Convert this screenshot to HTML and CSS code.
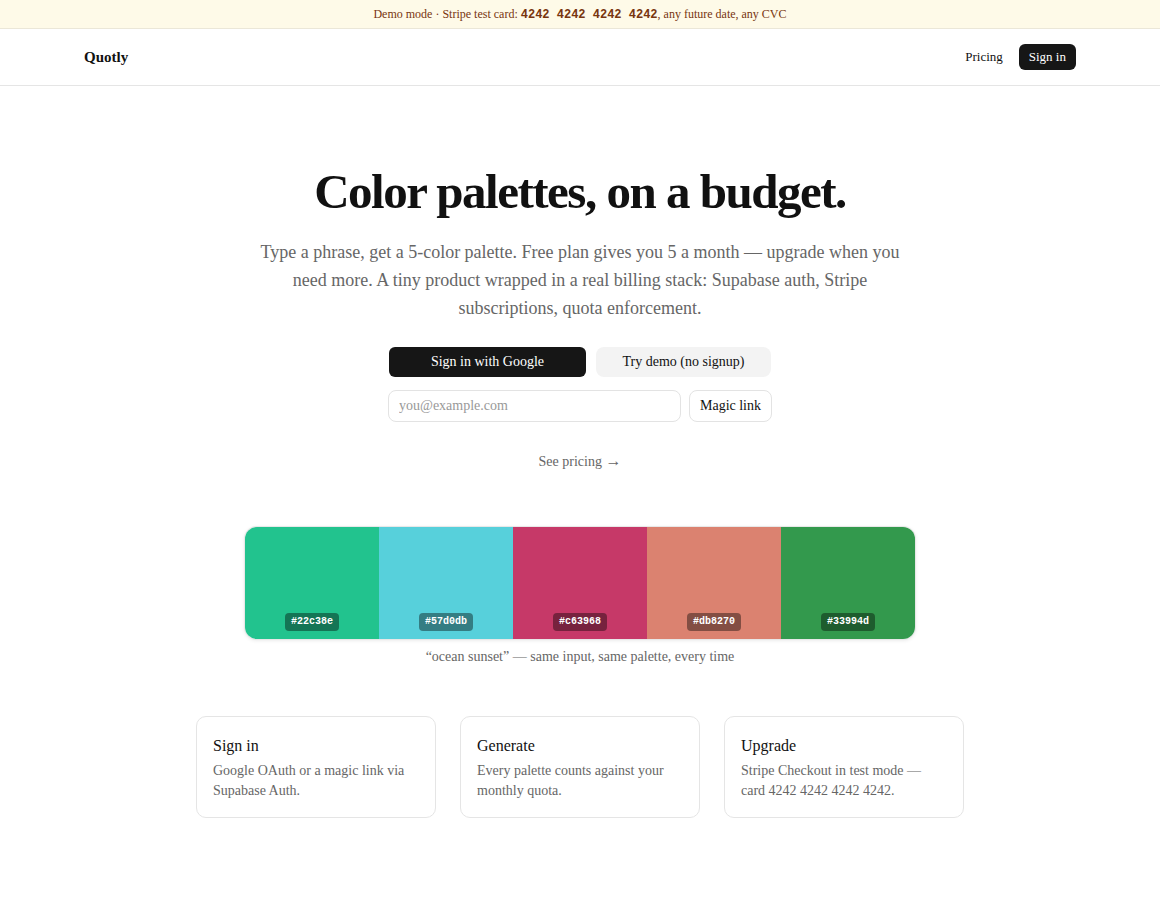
FILE: index.html
```html
<!DOCTYPE html>
<html lang="en">
<head>
  <meta charset="UTF-8">
  <meta name="viewport" content="width=device-width, initial-scale=1.0">
  <title>Quotly</title>
  <link rel="stylesheet" href="styles.css">
</head>
<body>
  <div class="banner">Demo mode · Stripe test card: <code>4242 4242 4242 4242</code>, any future date, any CVC</div>
  <header class="nav">
    <div class="wrap nav-inner">
      <a class="brand" href="#">Quotly</a>
      <nav class="nav-links">
        <a href="#">Pricing</a>
        <a class="btn-dark small" href="#">Sign in</a>
      </nav>
    </div>
  </header>

  <main class="hero">
    <h1>Color palettes, on a budget.</h1>
    <p class="lede">Type a phrase, get a 5-color palette. Free plan gives you 5 a month — upgrade when you need more. A tiny product wrapped in a real billing stack: Supabase auth, Stripe subscriptions, quota enforcement.</p>

    <div class="actions">
      <button class="btn-dark wide">Sign in with Google</button>
      <button class="btn-light">Try demo (no signup)</button>
    </div>
    <form class="magic">
      <input type="email" placeholder="you@example.com">
      <button type="button" class="btn-outline">Magic link</button>
    </form>
    <a class="see-pricing" href="#">See pricing <span class="arrow">→</span></a>

    <div class="palette">
      <div class="swatch" style="background:#22c38e"><span>#22c38e</span></div>
      <div class="swatch" style="background:#57d0db"><span>#57d0db</span></div>
      <div class="swatch" style="background:#c63968"><span>#c63968</span></div>
      <div class="swatch" style="background:#db8270"><span>#db8270</span></div>
      <div class="swatch" style="background:#33994d"><span>#33994d</span></div>
    </div>
    <p class="caption">“ocean sunset” — same input, same palette, every time</p>

    <div class="steps">
      <div class="step">
        <h3>Sign in</h3>
        <p>Google OAuth or a magic link via Supabase Auth.</p>
      </div>
      <div class="step">
        <h3>Generate</h3>
        <p>Every palette counts against your monthly quota.</p>
      </div>
      <div class="step">
        <h3>Upgrade</h3>
        <p>Stripe Checkout in test mode — card 4242 4242 4242 4242.</p>
      </div>
    </div>
  </main>
</body>
</html>
```

FILE: styles.css
```css
body {
  margin: 0;
  font-family: "Liberation Serif", "Times New Roman", serif;
  color: #111;
  background: #fff;
}
a {
  color: inherit;
  text-decoration: none;
}
.banner {
  background: #fefae8;
  color: #78350f;
  border-bottom: 1px solid #ebe7d8;
  text-align: center;
  font-size: 12px;
  height: 28px;
  line-height: 28px;
}
.banner code {
  font-family: "Liberation Mono", monospace;
  font-weight: bold;
  font-size: 12px;
}
.nav {
  border-bottom: 1px solid #e5e5e5;
}
.wrap {
  max-width: 992px;
  margin: 0 auto;
  padding: 0 16px;
}
.nav-inner {
  display: flex;
  align-items: center;
  justify-content: space-between;
  height: 56px;
}
.brand {
  font-weight: bold;
  font-size: 15px;
}
.nav-links {
  display: flex;
  align-items: center;
  gap: 16px;
  font-size: 13px;
}
.btn-dark {
  background: #161616;
  color: #fff;
  border: 0;
  border-radius: 6px;
  font-family: inherit;
}
.btn-dark.small {
  padding: 5px 10px;
  font-size: 13px;
  line-height: 16px;
}
.hero {
  text-align: center;
  padding-top: 76px;
}
.hero h1 {
  font-size: 49px;
  letter-spacing: -1.5px;
  margin: 0;
  line-height: 60px;
}
.lede {
  max-width: 650px;
  margin: 16px auto 0;
  font-size: 18px;
  line-height: 28px;
  color: #666;
}
.actions {
  display: flex;
  justify-content: center;
  gap: 10px;
  margin-top: 25px;
}
.actions button {
  height: 30px;
  font-size: 14px;
  font-family: inherit;
  cursor: pointer;
}
.btn-dark.wide {
  width: 197px;
}
.btn-light {
  width: 175px;
  background: #f3f3f3;
  border: 0;
  border-radius: 8px;
  color: #111;
}
.magic {
  display: flex;
  justify-content: center;
  gap: 8px;
  margin-top: 13px;
}
.magic input {
  width: 293px;
  height: 32px;
  box-sizing: border-box;
  border: 1px solid #e3e3e3;
  border-radius: 8px;
  padding: 0 10px;
  font-family: inherit;
  font-size: 14px;
}
.magic input::placeholder {
  color: #999;
}
.btn-outline {
  height: 32px;
  width: 83px;
  background: #fff;
  border: 1px solid #e3e3e3;
  border-radius: 8px;
  font-family: inherit;
  font-size: 14px;
  color: #111;
}
.see-pricing {
  display: inline-block;
  margin-top: 30px;
  font-size: 14px;
  color: #666;
}
.see-pricing .arrow {
  font-size: 16px;
}
.palette {
  display: flex;
  width: 670px;
  height: 112px;
  margin: 57px auto 0;
  border-radius: 12px;
  overflow: hidden;
  box-shadow: 0 0 0 1px #e8e8e8, 0 1px 4px rgba(0, 0, 0, 0.12);
}
.swatch {
  flex: 1;
  display: flex;
  align-items: flex-end;
  justify-content: center;
  padding-bottom: 8px;
}
.swatch span {
  background: rgba(0, 0, 0, 0.4);
  color: #fff;
  font-family: "Liberation Mono", monospace;
  font-weight: bold;
  font-size: 10px;
  line-height: 18px;
  padding: 0 6px;
  border-radius: 4px;
}
.caption {
  margin: 10px 0 0;
  font-size: 14px;
  color: #666;
}
.steps {
  display: flex;
  justify-content: center;
  gap: 24px;
  margin-top: 51px;
  text-align: left;
}
.step {
  width: 240px;
  height: 102px;
  box-sizing: border-box;
  border: 1px solid #e5e5e5;
  border-radius: 10px;
  padding: 20px 16px;
}
.step h3 {
  margin: 0;
  font-size: 16px;
  font-weight: normal;
  line-height: 18px;
}
.step p {
  margin: 6px 0 0;
  font-size: 14px;
  line-height: 20px;
  color: #666;
}
```
